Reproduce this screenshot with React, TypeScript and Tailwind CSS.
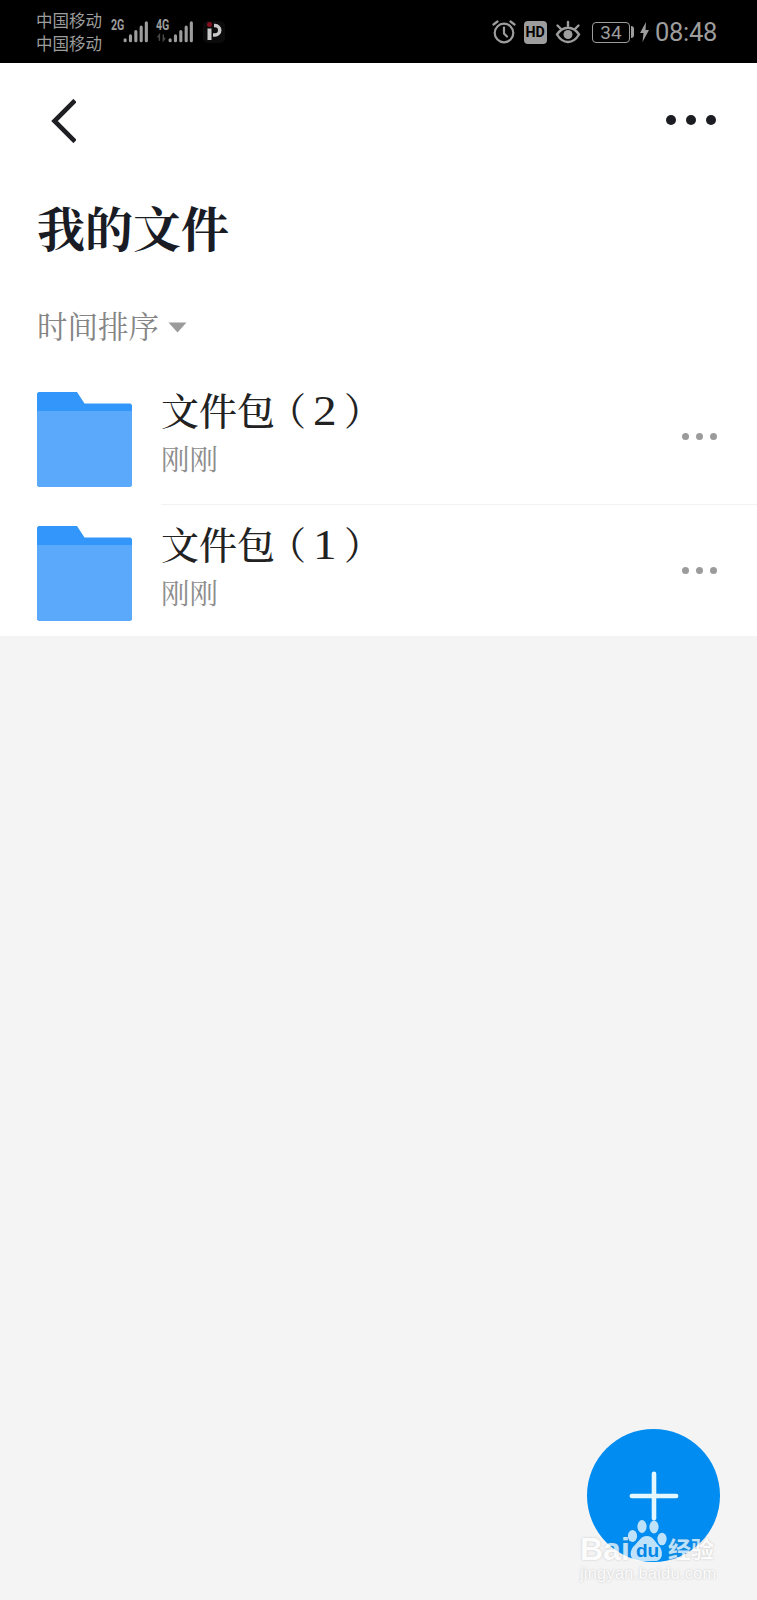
import { Plus } from "lucide-react"

interface FileItem {
  id: number
  name: string
  index: string
  time: string
}

const files: FileItem[] = [
  { id: 2, name: "文件包", index: "2", time: "刚刚" },
  { id: 1, name: "文件包", index: "1", time: "刚刚" },
]

function Signal({ label, data }: { label: string; data?: boolean }) {
  return (
    <div className="flex h-[26px] w-[37px]">
      <span className="h-3 w-[13px] origin-top-left scale-x-[0.76] font-['Roboto',sans-serif] text-[14px] leading-3 font-bold">
        {label}
      </span>
      <svg className="-ml-[13px]" width="38" height="26" viewBox="0 0 38 26" fill="none" stroke="#9d9d9d" strokeWidth="3.2" strokeLinecap="round">
        <path d="M14.500 21v1M20 17v5M25.500 12.500v9.500M31 8v14M36.300 3.500v18.500" />
        {data && <path d="M3.500 21.500v-5.500l-1.500 2M7.500 16v5.500l1.500-2" stroke="#4a4a4a" strokeWidth="1.500" />}
      </svg>
    </div>
  )
}

function StatusBar() {
  return (
    <header className="flex h-[63px] items-center bg-black pr-[41px] pl-9 font-['Roboto','Noto_Sans_CJK_SC',sans-serif] text-[#9d9d9d]">
      <div className="w-[67px] pt-[3px] text-[16.5px] leading-[23px] whitespace-nowrap">
        <p>中国移动</p>
        <p>中国移动</p>
      </div>
      <div className="ml-2 flex items-center gap-2">
        <Signal label="2G" />
        <Signal label="4G" data />
        <svg className="ml-0.5" width="22" height="22" viewBox="0 0 22 22" fill="none">
          <rect width="22" height="22" rx="5" fill="#0b0b0b" />
          <circle cx="6.500" cy="3.500" r="2.500" fill="#86101f" />
          <path d="M6.500 7.500v11.500" stroke="#c9c9c9" strokeWidth="4" />
          <path d="M11 4.500h1a4.700 4.700 0 0 1 0 9.500h-2" stroke="#c9c9c9" strokeWidth="3.500" />
        </svg>
      </div>
      <div className="ml-auto flex items-center pt-px">
        <svg width="24" height="24" viewBox="0 0 24 24" fill="none" stroke="#9d9d9d" strokeWidth="2.200" strokeLinecap="round">
          <circle cx="12" cy="13" r="9.300" />
          <path d="M12 7.500v6l3 3M1.500 4.500l4-3M22.500 4.500l-4-3" />
        </svg>
        <span className="ml-2 flex h-[23px] w-[23px] items-center justify-center rounded bg-[#9d9d9d] text-[15px] font-bold text-black">
          <span className="scale-x-95">HD</span>
        </span>
        <svg className="ml-2" width="26" height="24" viewBox="0 0 26 24" fill="none" stroke="#9d9d9d" strokeWidth="2.400" strokeLinecap="round">
          <path d="M2 14.500C8 5.500 18 5.500 24 14.500C18 24.500 8 24.500 2 14.500Z" />
          <circle cx="13" cy="14.500" r="4.500" fill="#9d9d9d" stroke="none" />
          <path d="M13 2v4M2.500 5.500l3 3M23.500 5.500l-3 3" />
        </svg>
        <span className="ml-[11px] flex h-[21px] w-[38px] items-center justify-center rounded border border-[#9d9d9d] text-[19px] leading-none">
          34
        </span>
        <span className="ml-px h-[12px] w-[3px] rounded-r bg-[#9d9d9d]" />
        <svg className="ml-1.5" width="9" height="20" viewBox="0 0 9 20" fill="#9d9d9d">
          <path d="M6 0L0 11h3.500L2.500 20L9 8H5.500Z" />
        </svg>
        <span className="ml-[6px] w-[61px] pt-[2px] text-[25.500px] leading-none tracking-[-0.3px]">08:48</span>
      </div>
    </header>
  )
}

function FolderIcon() {
  return (
    <svg className="shrink-0" width="95" height="95" viewBox="0 0 95 95">
      <path d="M1.500 0H40L47.500 11.500H93.500L95 13V22H0V1.500Z" fill="#3296fa" />
      <path d="M0 19H95V93.500L93.500 95H1.500L0 93.500Z" fill="#5ba9fb" />
    </svg>
  )
}

function FileRow({ file, divider }: { file: FileItem; divider: boolean }) {
  return (
    <li className="flex h-[134px] pl-[37px]">
      <div className="pt-[22px]">
        <FolderIcon />
      </div>
      <div className={`ml-[29px] flex h-[135px] flex-1 justify-between pr-[40px] ${divider ? "border-b border-[#f2f2f2]" : ""}`}>
        <div className="pt-[13px]">
          <h2 className="flex h-[52px] items-center text-[38px] leading-[52px] font-medium whitespace-nowrap text-[#222]">
            <span>{file.name}</span>
            <span className="ml-[12px] [font-feature-settings:'halt']">（</span>
            <span className="mt-[3px] ml-[8px] w-[22px] scale-x-110 font-['Liberation_Serif',serif] text-[43px] font-normal">
              {file.index}
            </span>
            <span className="ml-[8px] [font-feature-settings:'halt']">）</span>
          </h2>
          <p className="mt-[5px] text-[28.5px] leading-[36px] text-[#8d8d8d]">{file.time}</p>
        </div>
        <button className="flex h-2 gap-[7px] pt-[63px]" aria-label="更多">
          <span className="h-[7px] w-[7px] rounded-full bg-[#9b9b9b]" />
          <span className="h-[7px] w-[7px] rounded-full bg-[#9b9b9b]" />
          <span className="h-[7px] w-[7px] rounded-full bg-[#9b9b9b]" />
        </button>
      </div>
    </li>
  )
}

function Watermark() {
  return (
    <div className="absolute top-[1517px] left-[580px] w-[140px] font-['Liberation_Sans','Noto_Sans_CJK_SC',sans-serif] font-bold text-white opacity-75 [text-shadow:0_0_2px_rgba(130,130,130,0.6)]">
      <div className="flex h-[46px] items-end">
        <span className="w-[48px] text-[32px] leading-[27px]">Bai</span>
        <div className="relative h-[46px] w-[40px]">
          <svg width="40" height="44" viewBox="0 0 40 44" fill="#fff">
            <ellipse cx="4.500" cy="19" rx="4.600" ry="6" />
            <ellipse cx="14" cy="9.500" rx="4.600" ry="6.500" />
            <ellipse cx="26" cy="10" rx="4.600" ry="6.500" />
            <ellipse cx="34" cy="22" rx="4.600" ry="6.300" />
            <path d="M19 19c6 0 8 6 12 10s5 15-4 15H11C1 44 1 34 6 29s7-10 13-10Z" />
          </svg>
          <span className="absolute top-[24px] left-[8px] text-[19px] leading-5 text-[#0084e6] [text-shadow:none]">du</span>
        </div>
        <span className="text-[23px] leading-[26px]">经验</span>
      </div>
      <p className="mt-px text-[16.5px] leading-[18px] font-normal tracking-[0.2px] whitespace-nowrap">jingyan.baidu.com</p>
    </div>
  )
}

export default function App() {
  return (
    <div className="relative h-[1600px] w-[757px] overflow-hidden bg-[#f4f4f4] font-['Noto_Serif_CJK_SC','Noto_Sans_CJK_SC',serif]">
      <StatusBar />
      <main className="h-[573px] bg-white">
        <nav className="flex h-[114px] items-center justify-between pr-[41px] pl-[51px]">
          <svg className="mt-px" width="25" height="44" viewBox="0 0 25 44" fill="none" stroke="#1d1f23" strokeWidth="4.6">
            <path d="M24 1.500L3.500 22L24 42.500" />
          </svg>
          <button className="flex gap-[10px]" aria-label="菜单">
            <span className="h-[10px] w-[10px] rounded-full bg-[#1b1d22]" />
            <span className="h-[10px] w-[10px] rounded-full bg-[#1b1d22]" />
            <span className="h-[10px] w-[10px] rounded-full bg-[#1b1d22]" />
          </button>
        </nav>
        <h1 className="pl-[37px] text-[48px] leading-[100px] font-bold text-[#191c24]">我的文件</h1>
        <div className="flex h-[93px] items-center gap-[9px] pt-2 pl-[37px] text-[30.5px] text-[#858585]">
          <span className="-mt-[3px]">时间排序</span>
          <svg width="19" height="11" viewBox="0 0 19 11" fill="#9b9b9b">
            <path d="M0.500 0.500H18.500L9.500 10.500Z" />
          </svg>
        </div>
        <ul>
          {files.map((file, i) => (
            <FileRow key={file.id} file={file} divider={i < files.length - 1} />
          ))}
        </ul>
      </main>
      <button
        className="absolute top-[1429px] left-[587px] flex h-[133px] w-[133px] items-center justify-center rounded-full bg-[#008cf0] text-[#e4f7ff]"
        aria-label="新建"
      >
        <Plus size={76} strokeWidth={1.45} />
      </button>
      <Watermark />
    </div>
  )
}
